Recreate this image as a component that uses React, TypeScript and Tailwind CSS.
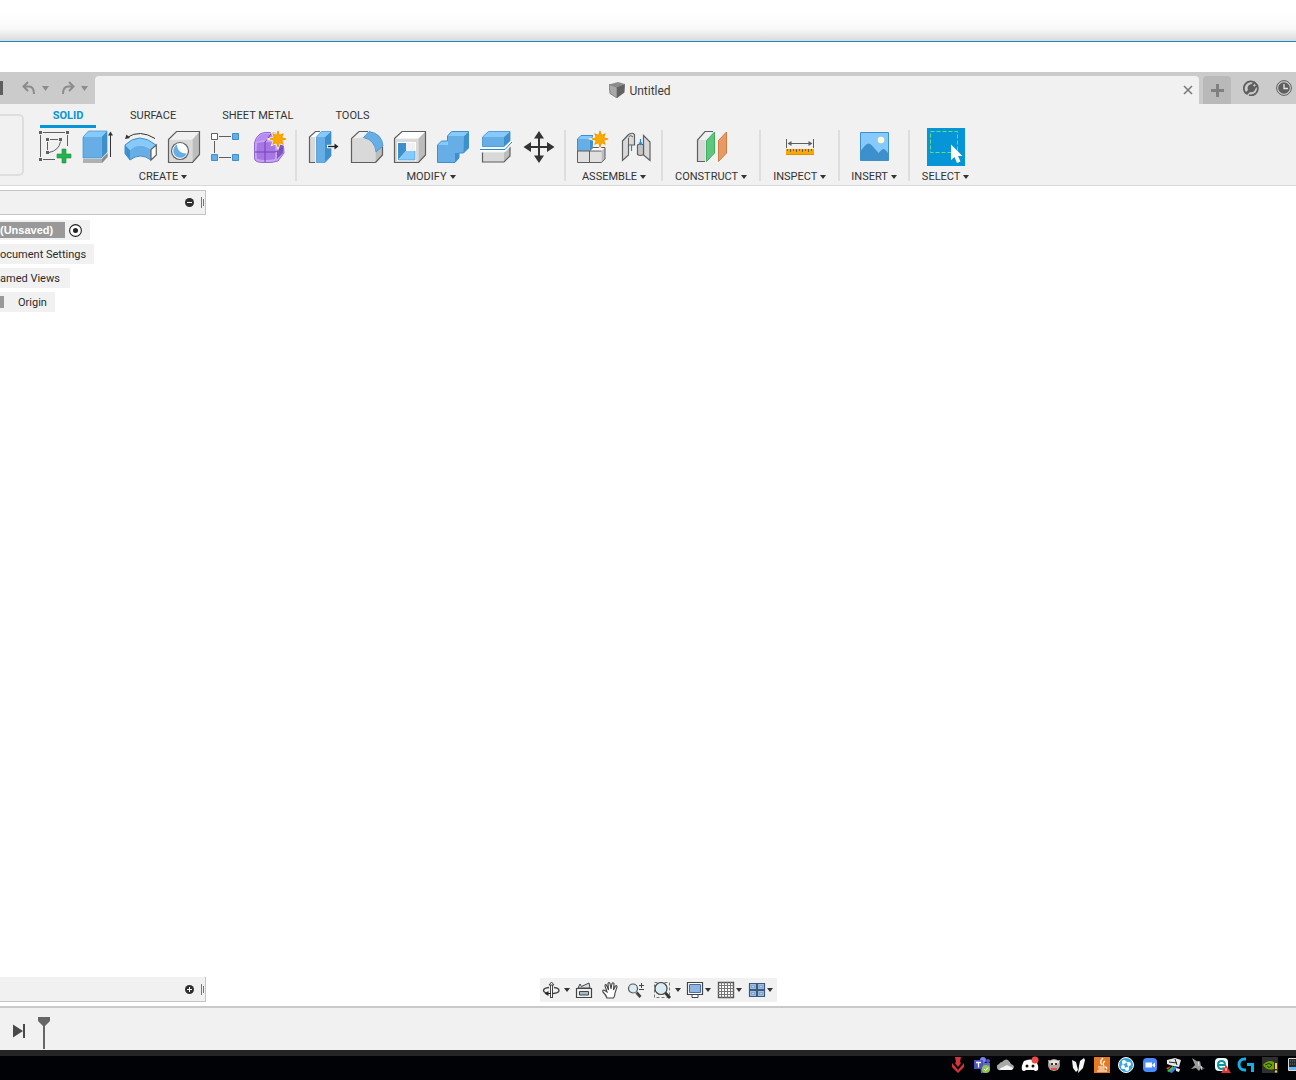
import type { ReactNode } from 'react';

const Caret = () => (
  <svg width="6" height="4" viewBox="0 0 6 4" className="shrink-0">
    <path d="M0 0h6L3 4z" fill="currentColor" />
  </svg>
);

const MenuCaret = () => (
  <svg width="7" height="5" viewBox="0 0 7 5" className="shrink-0">
    <path d="M0 0h7L3.500 5z" fill="currentColor" />
  </svg>
);

const Star = ({ x, y }: { x: number; y: number }) => (
  <g transform={`translate(${x} ${y})`}>
    <path
      d="M0-9 1.6-4 5.7-5.7 4-1.6 9 0 4 1.6 5.7 5.7 1.6 4 0 9-1.6 4-5.7 5.7-4 1.6-9 0-4-1.6-5.7-5.7-1.6-4z"
      fill="#f8a000"
      stroke="#f1f1f1"
      strokeWidth="2"
      paintOrder="stroke"
    />
    <path
      d="M0-8 1.5-3.6 5.2-5.2 3.6-1.5 8 0 3.6 1.5 5.2 5.2 1.5 3.6 0 8-1.5 3.6-5.2 5.2-3.6 1.5-8 0-3.6-1.5-5.2-5.2-1.5-3.6z"
      fill="#fba800"
      stroke="#e89800"
      strokeWidth=".6"
    />
  </g>
);

const createTools: [string, ReactNode][] = [
  ['Create Sketch', (
    <>
      <path d="M7 4.500h22M31.500 7v11M4.500 7v22M7 31.500h12" fill="none" stroke="#5f5f5f" />
      <path d="M14 11.500h8M11.500 14v8M13 24.500q10-2 11.500-11" fill="none" stroke="#5f5f5f" />
      <path d="M3 3h3v3H3zM30 3h3v3h-3zM3 30h3v3H3zM10 10h3v3h-3zM23 10h3v3h-3zM10 23h3v3h-3z" fill="#5f5f5f" />
      <path d="M26 21h4v5h5v4h-5v5h-4v-5h-5v-4h5z" fill="#26b050" stroke="#179640" strokeWidth=".6" />
    </>
  )],
  ['Extrude', (
    <>
      <path d="M4 31h19l5.5-6v4L23 35H4z" fill="#b0b0b0" />
      <path d="M23 31l5.5-6v4L23 35z" fill="#8c8c8c" />
      <path d="M4 9h18.5v21H4z" fill="#68aee6" />
      <path d="M4 9l5.5-6H28l-5.5 6z" fill="#85cafb" />
      <path d="M22.500 9L28 3v21l-5.500 6z" fill="#3e90cc" />
      <path d="M4 9l5.500-6H28v21l-5.500 6H4z" fill="none" stroke="#3e90cc" strokeWidth=".7" />
      <path d="M31.500 29V6" stroke="#333" />
      <path d="M31.500 3.500l2.500 4h-5z" fill="#333" />
    </>
  )],
  ['Revolve', (
    <>
      <path d="M3 17Q17 3 34 17l-5 4.500q-10-8-21 .5z" fill="#85cafb" />
      <path d="M3 17l5 5v10l-5-6.500z" fill="#3e90cc" />
      <path d="M8 22q10-8.500 21-.5V32q-10-8-21 0z" fill="#68aee6" />
      <path d="M3 17Q17 3 34 17M3 17v8.500L8 32q10-8 21 0" fill="none" stroke="#3e90cc" />
      <path d="M29 21.500l5.300-4.500v10L29 32z" fill="#fff" stroke="#5f5f5f" strokeWidth="1.200" />
      <path d="M5 9.500Q18 1 33 10.500" fill="none" stroke="#333" />
      <path d="M3 11l1.500-4.500L8 10z" fill="#333" />
    </>
  )],
  ['Hole', (
    <>
      <path d="M3.500 11.500h24v23h-24z" fill="#d9d9d9" />
      <path d="M3.500 11.500l8-8h23l-7 8z" fill="#f1f1f1" />
      <path d="M27.500 11.500l7-8v23l-7 8z" fill="#bcbcbc" />
      <path d="M3.500 11.500l8-8h23v23l-7 8h-24z" fill="none" stroke="#5f5f5f" strokeWidth="1.200" />
      <circle cx="15" cy="23" r="8.500" fill="#fff" stroke="#5f5f5f" strokeWidth="1.200" />
      <path d="M12 16.600a7 7 0 1 0 9.700 9q-9.700 0-9.700-9z" fill="#68aee6" />
    </>
  )],
  ['Rectangular Pattern', (
    <>
      <path d="M11 8.500h12M11 29.500h12M6.500 13v12" stroke="#5f5f5f" />
      <path d="M3.500 5.500h6v6h-6z" fill="#fff" stroke="#5f5f5f" />
      <path d="M24.500 5.500h6v6h-6zM3.500 26.500h6v6h-6zM24.500 26.500h6v6h-6z" fill="#68aee6" stroke="#3e90cc" />
    </>
  )],
  ['Create Form', (
    <>
      <path d="M9 6Q12 4 18 4.500L30 6q3 8 3 19l-6 8q-6 2-12 1.500Q3 35 3.500 30V15q1-6 5.500-9z" fill="#c8a4f2" stroke="#8f68d0" />
      <path d="M5 14q2-6 7-8h10l2 7q-9-3-19 1z" fill="#b98af2" />
      <path d="M6 15q8-2 18 0 1 8 0 16-9 2-18 0-1-8 0-16z" fill="#a877e6" />
      <path d="M26 16l6-3v12l-6 6z" fill="#8055c4" />
      <path d="M14 14v20M4 24h20l8-4M14 14l6-8" fill="none" stroke="#7542b0" />
      <Star x={27} y={11} />
    </>
  )],
];

const modifyTools: [string, ReactNode][] = [
  ['Press Pull', (
    <>
      <path d="M5.500 9v25.500H11V9z" fill="#d9d9d9" />
      <path d="M5.500 9l6-5.500h4.500L11 9z" fill="#fff" />
      <path d="M16 3.500h-4.500l-6 5.500v25.500H11" fill="none" stroke="#5f5f5f" strokeWidth="1.200" />
      <path d="M12.500 9H21v25.500h-8.500z" fill="#68aee6" />
      <path d="M12.500 9l5-5.500H27L21 9z" fill="#85cafb" />
      <path d="M21 9l6-5.500V28l-6 6.500z" fill="#3e90cc" />
      <path d="M12.500 9l5-5.500H27V28l-6 6.500h-8.500z" fill="none" stroke="#3e90cc" strokeWidth=".7" />
      <path d="M23 18.500h9" stroke="#f1f1f1" strokeWidth="3.500" />
      <path d="M24 18.500h8" stroke="#222" strokeWidth="1.300" />
      <path d="M30.500 15.500l4 3-4 3z" fill="#222" />
    </>
  )],
  ['Fillet', (
    <>
      <path d="M4.500 10.500L12 3.500h10l-6 6z" fill="#f1f1f1" />
      <path d="M4.500 10.500l12-1q12 2 12 14v11h-24z" fill="#d9d9d9" />
      <path d="M28.500 23.500l7-6V27l-7 7.500z" fill="#bcbcbc" />
      <path d="M28.500 34.500l7-7.500v-8M28.500 34.500h-24v-24L12 3.500h9" fill="none" stroke="#5f5f5f" strokeWidth="1.200" />
      <path d="M16.500 9.500l5.500-6q13 2 14 14.500l-7 6q-1-12-12.500-14.500z" fill="#68aee6" stroke="#3e90cc" strokeWidth=".8" />
    </>
  )],
  ['Shell', (
    <>
      <path d="M4.500 10.500h24v24h-24z" fill="#d9d9d9" />
      <path d="M4.500 10.500l7.500-7h23.500l-7 7z" fill="#fff" />
      <path d="M28.500 10.500l7-7V27l-7 7.500z" fill="#bcbcbc" />
      <path d="M4.500 10.500l7.500-7h23.500V27l-7 7.500h-24z" fill="none" stroke="#5f5f5f" strokeWidth="1.200" />
      <path d="M7 14h19v19H7z" fill="#fff" />
      <path d="M8 15h8v8l-8 9z" fill="#3e90cc" />
      <path d="M16 15h9v8h-9z" fill="#f1f1f1" />
      <path d="M8 32l8-9h9v9z" fill="#85cafb" />
      <path d="M8.500 15.500V32H25v-9" fill="none" stroke="#3e90cc" strokeWidth=".6" />
    </>
  )],
  ['Combine', (
    <>
      <path d="M14.500 8H31v17h-5v9.500H4.500V17h10z" fill="#68aee6" />
      <path d="M14.500 8l4-4.500h17L31 8zM4.500 17l4-4h6v4z" fill="#85cafb" />
      <path d="M31 8l4.500-4.500v16.500l-5 5zM22 34.500V25h4v5z" fill="#3e90cc" />
      <path d="M14.500 8l4-4.500h17V20l-5 5H26v5l-4 4.500H4.500V17l4-4h6z" fill="none" stroke="#3e90cc" />
      <path d="M27 29.500V35h-5z" fill="#f1f1f1" />
    </>
  )],
  ['Split Body', (
    <>
      <path d="M6.500 9h21.500v9.500H6.500z" fill="#68aee6" />
      <path d="M6.500 9l6-5.500H34L28 9z" fill="#85cafb" />
      <path d="M28 9l6-5.500v9.500l-6 5.500z" fill="#3e90cc" />
      <path d="M6.500 9l6-5.500H34V13l-6 5.500H6.500z" fill="none" stroke="#3e90cc" strokeWidth=".8" />
      <path d="M6.500 24.500H28v9.500H6.500z" fill="#d9d9d9" />
      <path d="M28 24.500l6-6v9.500l-6 6z" fill="#bcbcbc" />
      <path d="M6.500 24.500V34H28l6-6v-9.500" fill="none" stroke="#5f5f5f" strokeWidth="1.200" />
      <path d="M4 21.500h25l7-7.500" fill="none" stroke="#fff" strokeWidth="4" />
      <path d="M4 21.500h25l7-7.500" fill="none" stroke="#2488d0" />
    </>
  )],
  ['Move', (
    <>
      <path d="M20 8v22M9 19h22" stroke="#333" strokeWidth="2" />
      <path d="M20 3l5 7.500H15zM20 35l5-7.500H15zM4.500 19l7.500-5v10zM35.500 19L28 14v10z" fill="#333" />
    </>
  )],
];

const assembleTools: [string, ReactNode][] = [
  ['New Component', (
    <>
      <path d="M4.500 11h12v12h-12z" fill="#68aee6" />
      <path d="M4.500 11L8 7.500h12L16.500 11z" fill="#85cafb" />
      <path d="M16.500 11L20 7.500v12L16.500 23z" fill="#3e90cc" />
      <path d="M4.500 23V11L8 7.500h12" fill="none" stroke="#3e90cc" />
      <path d="M4.500 23h12v11.500h-12zM16.500 23h12v11.500h-12z" fill="#e0e0e0" />
      <path d="M16.500 23l3.500-3.500h12L28.500 23z" fill="#fff" />
      <path d="M28.500 23l3.500-3.500V31l-3.500 3.500z" fill="#bcbcbc" />
      <path d="M4.500 23v11.500h24L32 31V19.500M4.500 23h12l3.500-3.500h12M16.500 23v11.500M16.500 23h12" fill="none" stroke="#5f5f5f" />
      <Star x={27} y={11} />
    </>
  )],
  ['Joint', (
    <>
      <path d="M6.500 13l6-6.500q4-2.500 6 0V17h-6v10l-6 5.500z" fill="#d9d9d9" stroke="#5f5f5f" strokeWidth="1.200" />
      <path d="M12.500 10v7M12.500 9q2-3 4.500 0" fill="none" stroke="#5f5f5f" />
      <path d="M27.500 7.500l6.500 6.500v18.500L27.500 27z" fill="#d9d9d9" stroke="#5f5f5f" strokeWidth="1.200" />
      <path d="M21.500 17q3-2 6 0v9.500q-3 2-6 0z" fill="#c4c4c4" stroke="#5f5f5f" strokeWidth="1.200" />
      <path d="M15.500 17v6M24.500 11v6" stroke="#2488d0" strokeWidth="1.200" />
      <path d="M22.500 14.500h4l-2 3z" fill="#2488d0" />
    </>
  )],
];

const constructTools: [string, ReactNode][] = [
  ['Offset Plane', (
    <>
      <path d="M5.500 12h8v22h-8z" fill="#d9d9d9" />
      <path d="M5.500 12L13 3.500h8.500L13.500 12z" fill="#f1f1f1" />
      <path d="M13 33.500H5.500V12L13 3.500h8" fill="none" stroke="#5f5f5f" strokeWidth="1.200" />
      <path d="M14.500 12.500L22.500 4v21l-8 8.500z" fill="#5cc87c" stroke="#3fae62" />
      <path d="M26.500 12.500L34.500 4v21l-8 8.500z" fill="#e89a66" stroke="#d07d42" />
    </>
  )],
];

const inspectTools: [string, ReactNode][] = [
  ['Measure', (
    <>
      <path d="M6.500 11v9M33.500 11v9M9 15.500h22" stroke="#5f5f5f" />
      <path d="M7.500 15.500l4-2.500v5zM32.500 15.500l-4-2.500v5z" fill="#5f5f5f" />
      <path d="M6 21h28v6H6z" fill="#fba800" />
      <path d="M6 26.500h28" stroke="#e08e00" />
      <path d="M7.500 21v2M10.500 21v3M13.500 21v2M16.500 21v3M19.500 21v2M22.500 21v3M25.500 21v2M28.500 21v3M31.500 21v2" stroke="#5f5f5f" />
    </>
  )],
];

const insertTools: [string, ReactNode][] = [
  ['Insert Image', (
    <>
      <path d="M5.500 4.500h28v28h-28z" fill="#85cafb" />
      <path d="M5.500 23l5-6q3-3 6 0l7 8 3-3q2-2 4 0l3 3.500v7h-28z" fill="#3e90cc" />
      <path d="M5.500 4.500h28v28h-28z" fill="none" stroke="#3e90cc" />
      <circle cx="26" cy="12" r="3.300" fill="#fffbd0" />
    </>
  )],
];

const groups: { label: string; tools: [string, ReactNode][]; pad: string }[] = [
  { label: 'CREATE', tools: createTools, pad: 'pr-[3px]' },
  { label: 'MODIFY', tools: modifyTools, pad: 'pl-[5px] pr-1' },
  { label: 'ASSEMBLE', tools: assembleTools, pad: 'pl-[5px] pr-1' },
  { label: 'CONSTRUCT', tools: constructTools, pad: 'px-3' },
  { label: 'INSPECT', tools: inspectTools, pad: 'px-3' },
  { label: 'INSERT', tools: insertTools, pad: 'px-[11px]' },
];

const ToolGroup = ({ label, tools, pad }: { label: string; tools: [string, ReactNode][]; pad: string }) => (
  <div className={`flex flex-col items-center border-r-2 border-[#dedede] h-[51px] ${pad}`}>
    <div className="flex -mt-[2px]">
      {tools.map(([name, art]) => (
        <button key={name} aria-label={name} className="w-[43px] h-[38px] flex justify-center">
          <svg width="39" height="38" viewBox="0 0 39 38">{art}</svg>
        </button>
      ))}
    </div>
    <button className="flex items-center gap-[3px] mt-[2px] leading-[18px]">
      {label} <Caret />
    </button>
  </div>
);

const TopBar = () => (
  <div className="flex h-8 shrink-0 bg-[#cbcbcb] text-[#8c8c8c]">
    <div className="w-[95px] shrink-0 flex items-center">
      <button aria-label="Save" className="w-[3px] h-[14px] bg-[#5f5f5f]" />
      <button aria-label="Undo" className="ml-[19px]">
        <svg width="14" height="14" viewBox="0 0 14 14" fill="none" stroke="currentColor" strokeWidth="2">
          <path d="M6 1L1.500 5.500 6 10M2 5.500h5q5 0 5 7.500" />
        </svg>
      </button>
      <button aria-label="Undo history" className="ml-[6px]"><MenuCaret /></button>
      <button aria-label="Redo" className="ml-3">
        <svg width="14" height="14" viewBox="0 0 14 14" fill="none" stroke="currentColor" strokeWidth="2">
          <path d="M8 1l4.500 4.500L8 10M12 5.500H7q-5 0-5 7.500" />
        </svg>
      </button>
      <button aria-label="Redo history" className="ml-[6px]"><MenuCaret /></button>
    </div>
    <div className="flex-1 flex items-center mt-1 bg-[#f1f1f1] rounded-t-[4px] pl-[2px] pr-[6px]">
      <div className="flex-1 flex items-center justify-center gap-1 text-[12px] leading-[18px] text-[#3c3c3c]">
        <svg width="16" height="16" viewBox="0 0 16 16">
          <path d="M0 2.500L9 0l7 2-7.500 3z" fill="#8c8c8c" />
          <path d="M0 2.500L8 5v11L1 11.500z" fill="#a8a8a8" stroke="#6a6a6a" strokeWidth=".7" />
          <path d="M8 5l8-3-.5 8.500L8 16z" fill="#626262" />
        </svg>
        <span className="pt-px">Untitled</span>
      </div>
      <button aria-label="Close tab">
        <svg width="10" height="10" viewBox="0 0 10 10" stroke="#777" strokeWidth="1.500">
          <path d="M1 1l8 8M9 1L1 9" />
        </svg>
      </button>
    </div>
    <div className="flex items-center pl-1 shrink-0">
      <button aria-label="New design" className="w-7 h-7 mt-1 bg-[#b9b9b9] rounded-t-[4px] flex items-center justify-center">
        <svg width="13" height="13" viewBox="0 0 13 13"><path d="M5 0h3v5h5v3H8v5H5V8H0V5h5z" fill="#808080" /></svg>
      </button>
      <button aria-label="Extensions" className="ml-3">
        <svg width="16" height="16" viewBox="0 0 16 16">
          <path d="M3 13.500A7 7 0 1 1 13.500 12.500 7 7 0 0 1 6 15" fill="none" stroke="#5f5f5f" strokeWidth="1.800" />
          <path d="M2 13l3-3q-1.500-4 2-5.500l1.500-.5 4 4-.5 2q-2 3-5 2L4 15z" fill="#5f5f5f" />
          <path d="M9 5l3-3M11.500 8L14 5.500" stroke="#5f5f5f" strokeWidth="2" />
        </svg>
      </button>
      <button aria-label="Job status" className="ml-[17px] mr-1">
        <svg width="16" height="16" viewBox="0 0 16 16" fill="none">
          <circle cx="8" cy="8" r="7.400" stroke="#5f5f5f" />
          <circle cx="8" cy="8" r="5.800" fill="#5f5f5f" />
          <path d="M8 4v4.500h4" stroke="#e4e4e4" strokeWidth="1.300" />
        </svg>
      </button>
    </div>
  </div>
);

const Ribbon = () => (
  <div className="flex shrink-0 h-[82px] bg-[#f1f1f1] border-b border-[#d9d9d9] text-[11px] text-[#333]">
    <button aria-label="Workspace" className="w-6 h-[62px] mt-[10px] shrink-0 border-2 border-l-0 border-[#dedede] rounded-r-[5px]" />
    <div className="pl-[10px]">
      <nav className="flex h-6 pl-[6px] leading-6">
        <a href="#solid" className="w-14 text-center font-bold text-[#0696d7] border-b-[3px] border-[#0696d7]">SOLID</a>
        <a href="#surface" className="ml-[34px]">SURFACE</a>
        <a href="#sheet-metal" className="ml-[46px]">SHEET METAL</a>
        <a href="#tools" className="ml-[42px]">TOOLS</a>
      </nav>
      <div className="flex mt-[2px]">
        {groups.map((g) => <ToolGroup key={g.label} {...g} />)}
        <div className="flex flex-col items-center px-3">
          <button aria-label="Select" className="-mt-[2px] bg-[#0696d7]">
            <svg width="38" height="38" viewBox="0 0 38 38">
              <path d="M3.500 3.500h27v21h-27z" fill="none" stroke="#6fdc7c" strokeDasharray="4 2" />
              <path d="M24 16.500v15.500l3.500-3 2.500 6 3.500-1.500-2.500-5.500h4.500z" fill="#fff" />
            </svg>
          </button>
          <button className="flex items-center gap-[3px] mt-[2px] leading-[18px]">
            SELECT <Caret />
          </button>
        </div>
      </div>
    </div>
  </div>
);

const PanelBar = ({ open, label }: { open: boolean; label: string }) => (
  <div className={`w-[206px] h-[25px] shrink-0 flex items-center justify-end bg-[#f1f1f1] border-r border-b border-[#c4c4c4] pr-px gap-[7px] ${open ? 'border-t' : ''}`}>
    <button aria-label={label}>
      <svg width="9" height="9" viewBox="0 0 9 9">
        <circle cx="4.500" cy="4.500" r="4.500" fill="#2f2f2f" />
        <path d={open ? 'M2 4.500h5' : 'M2 4.500h5M4.500 2v5'} stroke="#fff" />
      </svg>
    </button>
    <svg width="3" height="11" viewBox="0 0 3 11" stroke="#777"><path d="M.5 0v11M2.500 2v7" /></svg>
  </div>
);

const Browser = () => (
  <div>
    <PanelBar open label="Collapse browser" />
    <ul className="flex flex-col items-start gap-1 mt-[5px] text-[11px] leading-[22px] text-[#2b2b2b]">
      <li className="flex items-center h-5 bg-[#f1f1f1]">
        <span className="h-4 w-[65px] leading-4 bg-[#999] text-white font-bold font-['Liberation_Sans',sans-serif]">(Unsaved)</span>
        <button aria-label="Activate component" className="px-1 mr-1">
          <svg width="13" height="13" viewBox="0 0 13 13">
            <circle cx="6.500" cy="6.500" r="5.900" fill="#fff" stroke="#222" strokeWidth="1.100" />
            <circle cx="6.500" cy="6.500" r="2.500" fill="#222" />
          </svg>
        </button>
      </li>
      <li className="h-5 bg-[#f1f1f1] pr-2">ocument Settings</li>
      <li className="h-5 bg-[#f1f1f1] pr-[10px]">amed Views</li>
      <li className="h-5 bg-[#f1f1f1] pr-2 flex"><span className="w-1 h-3 mt-1 mr-[14px] bg-[#999]" />Origin</li>
    </ul>
  </div>
);

const viewTools: { name: string; menu: boolean; space: string; art: ReactNode }[] = [
  { name: 'Orbit', menu: true, space: 'gap-1', art: (
    <>
      <path d="M9.500 3v14" stroke="#444" strokeWidth="3" />
      <path d="M9.500 4v12" stroke="#fff" />
      <path d="M9.500 1L7 4h5z" fill="#fff" stroke="#444" />
      <path d="M7 6.500Q1.500 7 1.500 9.500q0 1.500 3 2.500M12 6.500q5 .5 5 3t-6 3" fill="none" stroke="#444" strokeWidth="1.300" />
      <path d="M2.500 12.500l4-2.500v5z" fill="#222" />
      <path d="M6 12.500h3" stroke="#222" />
    </>
  ) },
  { name: 'Look At', menu: false, space: 'ml-[3px]', art: (
    <>
      <path d="M3 7l2-4 1.500 2.500L14 2l1 5z" fill="#d7dde0" stroke="#444" />
      <path d="M1.500 7.500h15v9h-15z" fill="#eef0f1" stroke="#444" strokeWidth="1.200" />
      <path d="M4.500 10.500h9v3.500h-9z" fill="#a9bcc5" stroke="#444" />
    </>
  ) },
  { name: 'Pan', menu: false, space: 'ml-2', art: (
    <path d="M6 17q-1-3-4-6-1-2 1-2l3 2-2-6q0-2 1.500-1L7.500 9 7 2.500q1-2 2 0L10 8l1-5.500q1-1.500 2 0L12.500 9l2-4q1.500-1 1.500 1l-2 6q0 3-1.500 5z" fill="#fff" stroke="#444" strokeWidth="1.100" />
  ) },
  { name: 'Zoom', menu: false, space: 'ml-2', art: (
    <>
      <circle cx="6" cy="7.500" r="4.500" fill="#d8edf3" stroke="#555" strokeWidth="1.200" />
      <path d="M9.500 11.500l4 4.500" stroke="#444" strokeWidth="2.800" />
      <path d="M12 4.500h5M14.500 2v5M12 8.500h5" stroke="#444" />
    </>
  ) },
  { name: 'Fit', menu: true, space: 'ml-2 gap-1', art: (
    <>
      <path d="M1.500 1.500h15v15h-15z" fill="none" stroke="#777" strokeDasharray="3 2" />
      <circle cx="8" cy="7.500" r="6" fill="#d8edf3" stroke="#444" strokeWidth="1.200" />
      <path d="M12.500 12l4.500 5" stroke="#333" strokeWidth="2.800" />
    </>
  ) },
  { name: 'Display Settings', menu: true, space: 'ml-[3px] gap-px', art: (
    <>
      <path d="M1.500 1.500h15v12h-15z" fill="#fff" stroke="#444" strokeWidth="1.200" />
      <path d="M3.500 3.500h11v8h-11z" fill="#8fb6e2" stroke="#4a6ea2" />
      <path d="M6 14v2.500h6V14" fill="#fff" stroke="#444" />
    </>
  ) },
  { name: 'Grid and Snaps', menu: true, space: 'ml-1 gap-px', art: (
    <>
      <path d="M1.500 1.500h15v15h-15z" fill="#fff" stroke="#555" strokeWidth="1.400" />
      <path d="M4.500 1v16M7.500 1v16M10.500 1v16M13.500 1v16M1 4.500h16M1 7.500h16M1 10.500h16M1 13.500h16" stroke="#777" />
    </>
  ) },
  { name: 'Viewports', menu: true, space: 'ml-1 gap-px', art: (
    <>
      <path d="M1.500 2.500h7v6h-7zM9.500 2.500h7v6h-7zM1.500 9.500h7v6h-7zM9.500 9.500h7v6h-7z" fill="#9fc0e8" stroke="#3f5878" strokeWidth="1.200" />
      <path d="M3.500 4.500h3v2h-3zM11.500 4.500h3v2h-3zM3.500 11.500h3v2h-3zM11.500 11.500h3v2h-3z" fill="#b9d4f2" stroke="#6b8fbc" strokeWidth=".7" />
    </>
  ) },
];

const ViewBar = () => (
  <div className="flex items-center h-6 px-[2px] bg-[#f1f1f1] text-[#333]">
    {viewTools.map(({ name, menu, space, art }) => (
      <button key={name} aria-label={name} className={`flex items-center ${space} ${menu ? 'pr-[2px]' : ''}`}>
        <svg width="18" height="18" viewBox="0 0 18 18">{art}</svg>
        {menu && <Caret />}
      </button>
    ))}
  </div>
);

const Timeline = () => (
  <div className="shrink-0 h-11 flex border-t-2 border-[#c9c9c9] bg-[#f1f1f1]">
    <button aria-label="Go to end" className="ml-[13px] mt-1">
      <svg width="12" height="14" viewBox="0 0 12 14" fill="#4a4a4a"><path d="M0 .5L10 7 0 13.500zM10 0h2v14h-2z" /></svg>
    </button>
    <svg width="12" height="32" viewBox="0 0 12 32" className="ml-[13px] mt-[9px]" fill="#666">
      <path d="M0 0h12v4L7 9v23H5V9L0 4z" />
    </svg>
  </div>
);

const trayIcons: [string, ReactNode][] = [
  ['Valorant', <path d="M6 1h6l-1 5 1 1-3 4-3-4 1-1zM3 7l6 7 6-7v4l-6 6-6-6z" fill="#d8323c" />],
  ['Teams', (
    <>
      <circle cx="10" cy="4" r="3" fill="#7b83eb" /><circle cx="15" cy="5" r="2" fill="#5059c9" />
      <path d="M7 7h10v6l-4 4H8z" fill="#6068d0" /><path d="M1 4h9v9H1z" fill="#4b53bc" />
      <path d="M3 6.500h5M5.500 6.500v5" stroke="#fff" strokeWidth="1.300" />
      <circle cx="13" cy="13" r="4" fill="#92c353" /><path d="M11 13l1.500 1.500L15 11.500" fill="none" stroke="#fff" />
    </>
  )],
  ['OneDrive', (
    <>
      <path d="M4 14a3 3 0 0 1-2-6q1-2 3-2 5-6 9 2 3 1 3 3t-3 3z" fill="#a8a8a8" />
      <path d="M2 13l8-4 6 3q0 2-3 2H4z" fill="#f4f4f4" />
    </>
  )],
  ['Discord', (
    <>
      <path d="M3 5q6-3 12 0 3 5 2 9-3 2-4 0H5q-2 2-4 0-1-4 2-9z" fill="#fff" />
      <circle cx="6" cy="10" r="1.500" fill="#111" /><circle cx="12" cy="10" r="1.500" fill="#111" />
      <circle cx="14" cy="4" r="3.500" fill="#f04747" />
    </>
  )],
  ['Game launcher', (
    <>
      <circle cx="9" cy="9" r="6" fill="#b5a69b" /><path d="M3 4l4 1-3 3zM15 4l-4 1 3 3z" fill="#d8d8d8" />
      <path d="M5 5l4-1 4 1-1 4H6z" fill="#e8e4e0" />
      <path d="M6 7h2v2H6zM10 7h2v2h-2z" fill="#333" /><path d="M6 12h6v2H6z" fill="#e05050" />
    </>
  )],
  ['Audio', (
    <path d="M3 4l4 2 1 4 1 4-2 2-3-4zM15 2l1 2-2 8-5 5 1-7 1-5z" fill="#f4f4f4" />
  )],
  ['Java', (
    <>
      <path d="M1 1h16v16H1z" fill="#e57a22" />
      <path d="M10 2q-4 4-1 7M12 5q-3 2-1 5M5 11h7M5.500 13h6M4 15h10M12 11q3 0 1 2" fill="none" stroke="#fff" strokeWidth="1.200" />
    </>
  )],
  ['Hub', (
    <>
      <circle cx="9" cy="9" r="7.500" fill="#3aa8dc" stroke="#fff" />
      <path d="M6 5l6 2-1 6-5-1z" fill="none" stroke="#fff" />
      <circle cx="7" cy="6" r="2" fill="#fff" /><circle cx="12" cy="8" r="2" fill="#fff" />
      <circle cx="6" cy="11" r="2" fill="#fff" /><circle cx="10" cy="13" r="2" fill="#fff" />
    </>
  )],
  ['Zoom', (
    <>
      <rect x="2" y="2" width="14" height="14" rx="4" fill="#4a8cff" />
      <path d="M4.500 6.500H11v5H4.500zM11.500 8.500L14 6.500v5l-2.500-1.500z" fill="#fff" />
    </>
  )],
  ['Printer', (
    <>
      <path d="M2 4l8-2 6 2-2 7-6-1-6-2z" fill="#e6e6e6" /><path d="M4 6l8 1M10 3l2 6" stroke="#222" />
      <path d="M4 16l6-6 2 2-5 5z" fill="#3f78ff" /><path d="M1 12l5-2-3 4z" fill="#e33" /><path d="M2 15l6-5 1 2-5 4z" fill="#3c3" />
      <path d="M11 12l4 1-1 3-3-1z" fill="#eee" />
    </>
  )],
  ['Device', <><path d="M3 2l6 4 2-1 1 5 4 3-4-1-2 3-3-3-5 1 4-4z" fill="#9a9a9a" /><path d="M9 5l1 5M12 10l1 4" stroke="#e0e0e0" /></>],
  ['Antivirus', (
    <>
      <rect x="2" y="2" width="13" height="13" rx="4" fill="#f2ffff" />
      <path d="M5 9h7q0-4-3.500-4T5 9q0 4 4 4l2-1" fill="none" stroke="#10959b" strokeWidth="2" />
      <path d="M13 9l5 8H8z" fill="#e03434" /><path d="M13 12v3" stroke="#fff" />
    </>
  )],
  ['Logitech G', (
    <path d="M9 3H7.500a5.500 5.500 0 0 0 0 11H9M10 8.500h5.500V16" fill="none" stroke="#12b2e8" strokeWidth="3" />
  )],
  ['NVIDIA', (
    <>
      <path d="M1 1h16v16H1z" fill="#303030" />
      <path d="M2 9q5-6 11-3v7Q6 15 2 9z" fill="#6da500" /><path d="M4 9q4-3 7 0-3 4-5 1" fill="none" stroke="#1d2b00" />
      <path d="M15 7v6M15 14.500v2" stroke="#ffd800" strokeWidth="2" />
    </>
  )],
  ['Task manager', (
    <>
      <path d="M3.500 2.500h14v12h-14z" fill="#24292c" stroke="#ddd" />
      <path d="M5 5h12M5 8h12" stroke="#777" strokeDasharray="1 1" /><path d="M4 11h13v3H4z" fill="#63b9ee" />
    </>
  )],
];

const App = () => (
  <div className="h-screen flex flex-col overflow-hidden bg-white font-['Roboto','Liberation_Sans',sans-serif]">
    <div className="h-[42px] shrink-0 border-b border-[#1e84cc] bg-linear-to-b from-white from-30% via-[#f9f9f9] via-70% to-[#dadada]" />
    <div className="h-[30px] shrink-0" />
    <TopBar />
    <Ribbon />
    <main className="flex-1 min-h-0 flex flex-col justify-between pt-1 pb-1">
      <Browser />
      <div className="flex items-end">
        <PanelBar open={false} label="Expand comments" />
        <div className="flex-1 flex justify-center pl-[21px] pr-[206px]"><ViewBar /></div>
      </div>
    </main>
    <Timeline />
    <footer className="shrink-0 h-[30px] border-t-6 border-[#252525] bg-[#000206] flex justify-end overflow-hidden">
      <div className="flex -mr-[10px]">
        {trayIcons.map(([name, art]) => (
          <button key={name} aria-label={name} className="w-6 h-[18px] flex justify-center">
            <svg width="18" height="18" viewBox="0 0 18 18">{art}</svg>
          </button>
        ))}
      </div>
    </footer>
  </div>
);

export default App;
